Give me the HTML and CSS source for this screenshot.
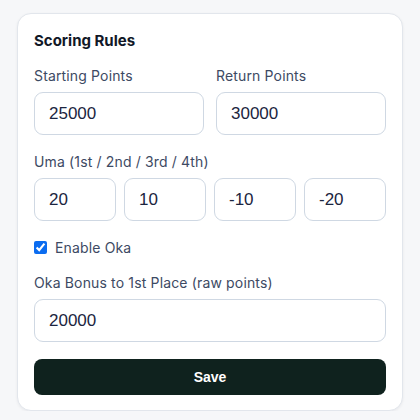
FILE: index.html
```html
<!DOCTYPE html>
<html>
<head>
<meta charset="utf-8">
<link rel="stylesheet" href="styles.css">
</head>
<body>
<div class="card">
  <h2 class="title">Scoring Rules</h2>
  <div class="grid2">
    <label class="field">
      <span class="label">Starting Points</span>
      <input class="input" type="text" value="25000">
    </label>
    <label class="field">
      <span class="label">Return Points</span>
      <input class="input" type="text" value="30000">
    </label>
  </div>
  <div class="field">
    <span class="label">Uma (1st / 2nd / 3rd / 4th)</span>
    <div class="grid4">
      <input class="input" type="text" value="20">
      <input class="input" type="text" value="10">
      <input class="input" type="text" value="-10">
      <input class="input" type="text" value="-20">
    </div>
  </div>
  <label class="check">
    <input type="checkbox" checked>
    <span>Enable Oka</span>
  </label>
  <label class="field">
    <span class="label">Oka Bonus to 1st Place (raw points)</span>
    <input class="input" type="text" value="20000">
  </label>
  <button class="save">Save</button>
</div>
</body>
</html>
```
FILE: styles.css
```css
html, body {
  margin: 0;
  padding: 0;
  background: #f6f7f9;
}
body {
  padding: 13px 17px 0;
  font-family: Inter, "Noto Sans", sans-serif;
}
.card {
  background: #fff;
  border: 1px solid #e2e6ec;
  border-radius: 14px;
  box-shadow: 0 1px 3px rgba(15, 23, 42, 0.06);
  padding: 17px 16px 15px;
  display: flex;
  flex-direction: column;
  gap: 18px;
}
.title {
  margin: 0 0 -2px;
  font-size: 15px;
  line-height: 20px;
  font-weight: 700;
  color: #111827;
}
.grid2 {
  display: grid;
  grid-template-columns: 1fr 1fr;
  gap: 12px;
}
.grid4 {
  display: grid;
  grid-template-columns: repeat(4, 1fr);
  gap: 8px;
}
.field {
  display: flex;
  flex-direction: column;
  gap: 8px;
}
.label {
  font-size: 14px;
  line-height: 17px;
  letter-spacing: 0.15px;
  color: #3d4a63;
}
.input {
  box-sizing: border-box;
  width: 100%;
  min-width: 0;
  height: 43px;
  margin: 0;
  padding: 0 14px;
  border: 1px solid #cfd8e3;
  border-radius: 9px;
  background: #fff;
  font-family: "Liberation Sans", Arial, sans-serif;
  font-size: 17px;
  color: #1b2540;
  outline: none;
}
.check {
  display: flex;
  align-items: center;
  gap: 8px;
  font-size: 14px;
  line-height: 17px;
  letter-spacing: 0.15px;
  color: #3d4a63;
}
.check input {
  margin: 0;
  width: 13px;
  height: 13px;
  accent-color: #0b6cf0;
}
.save {
  height: 36px;
  border: none;
  border-radius: 8px;
  background: #0f221e;
  color: #fff;
  font-family: "Liberation Sans", Arial, sans-serif;
  font-weight: 700;
  font-size: 14px;
  margin-top: -1px;
}
```
